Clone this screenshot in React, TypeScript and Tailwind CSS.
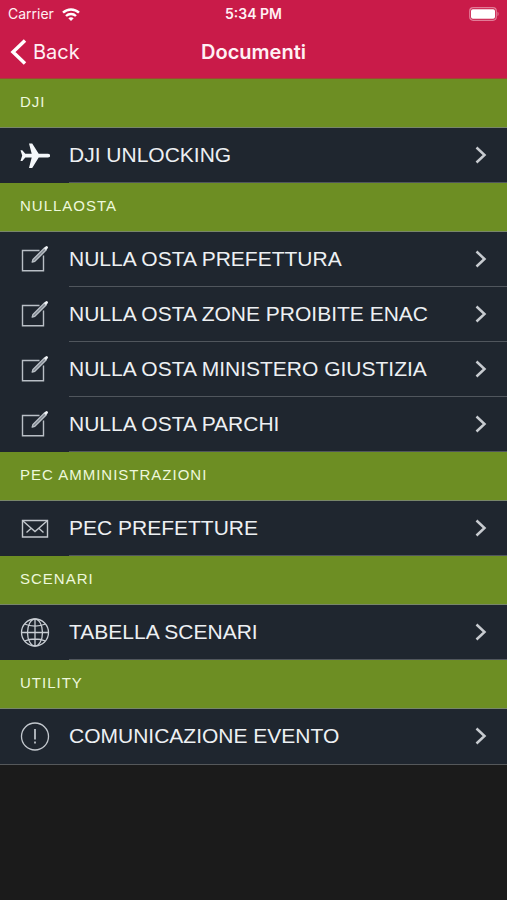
import type { ReactNode } from "react";

type IconName = "plane" | "edit" | "mail" | "globe" | "alert";

const icons: Record<IconName, ReactNode> = {
  plane: (
    <path
      d="M0.500 10.200h1.800l3 3.600h6.400L9 3.500h3.200l6.500 10.300H27c2 0 3.300.8 3.300 1.800s-1.300 1.800-3.300 1.800h-8.300L12.200 28H9l2.700-10.600H5.300l-3 3.600H.5l1.700-5.400z"
      fill="#f4f7fa"
    />
  ),
  edit: (
    <g fill="none" stroke="#b9bfc6" strokeWidth="1.400">
      <path d="M19.500 6.500H2.500v20.300h21V11.500" />
      <path d="M13 15.500L24.500 4l1.800 1.800L14.800 17.300l-2.600.8z" fill="#79818a" strokeLinejoin="round" />
      <path d="M25.700 4.300l.9-.9" stroke="#f0f3f6" strokeWidth="2.800" strokeLinecap="round" />
    </g>
  ),
  mail: (
    <g fill="none" stroke="#c3c8ce" strokeWidth="1.400">
      <path d="M2.500 7.500h25v16.500h-25z" />
      <path d="M3 8l12 10.500L27 8M6.500 19.500l5-4.500M23.500 19.500l-5-4.500" />
    </g>
  ),
  globe: (
    <g fill="none" stroke="#c8cdd3" strokeWidth="1.300">
      <circle cx="15" cy="15.500" r="13.500" />
      <ellipse cx="15" cy="15.500" rx="7.500" ry="13.500" />
      <path d="M15 2v27M1.500 15.500h27M4.500 7c6 2.700 15 2.700 21 0M4.500 24c6-2.700 15-2.700 21 0" />
    </g>
  ),
  alert: (
    <g fill="none" stroke="#c3c8ce" strokeWidth="1.300">
      <circle cx="15" cy="15.500" r="13.500" />
      <path d="M15 8v10.500M15 20.500v2" strokeWidth="1.700" />
    </g>
  ),
};

const sections: { title: string; icon: IconName; rows: string[] }[] = [
  { title: "DJI", icon: "plane", rows: ["DJI UNLOCKING"] },
  {
    title: "NULLAOSTA",
    icon: "edit",
    rows: [
      "NULLA OSTA PREFETTURA",
      "NULLA OSTA ZONE PROIBITE ENAC",
      "NULLA OSTA MINISTERO GIUSTIZIA",
      "NULLA OSTA PARCHI",
    ],
  },
  { title: "PEC AMMINISTRAZIONI", icon: "mail", rows: ["PEC PREFETTURE"] },
  { title: "SCENARI", icon: "globe", rows: ["TABELLA SCENARI"] },
  { title: "UTILITY", icon: "alert", rows: ["COMUNICAZIONE EVENTO"] },
];

function StatusBar() {
  return (
    <div className="grid h-7 grid-cols-3 items-center px-2 text-sm">
      <div className="flex items-center gap-2">
        <span>Carrier</span>
        <svg width="18" height="13" viewBox="0 0 18 13" fill="none" stroke="white" strokeWidth="2.400" aria-hidden="true">
          <path d="M1 4.700c4.500-4.300 11.500-4.300 16 0M4 8c2.800-2.700 7.200-2.700 10 0" />
          <path d="M6.300 10.200c1.600-1.400 3.800-1.400 5.400 0L9 13z" fill="white" stroke="none" />
        </svg>
      </div>
      <span className="text-center font-semibold">5:34 PM</span>
      <svg className="justify-self-end" width="30" height="14" viewBox="0 0 30 14" aria-hidden="true">
        <rect x="0.700" y="0.700" width="26.600" height="12.600" rx="3.500" fill="none" stroke="#e27c97" strokeWidth="1.200" />
        <rect x="2" y="2.300" width="24" height="9.400" rx="1.800" fill="white" />
        <path d="M28.500 4.800c1.500.6 1.500 3.800 0 4.400z" fill="#e27c97" />
      </svg>
    </div>
  );
}

function Row({ label, icon, last }: { label: string; icon: IconName; last: boolean }) {
  return (
    <li className={last ? "border-b border-[#55585b]" : ""}>
      <button type="button" className="flex h-[55px] w-full items-stretch pl-5 text-left">
        <span className="flex w-[49px] shrink-0 items-center">
          <svg width="30" height="32" viewBox="0 0 30 32" aria-hidden="true">
            {icons[icon]}
          </svg>
        </span>
        <span className={`flex min-w-0 flex-1 items-center justify-between border-b pr-5 ${last ? "border-transparent" : "border-[#50565d]"}`}>
          <span className="text-[21px] leading-7 text-[#edf0f3]">{label}</span>
          <svg width="12" height="18" viewBox="0 0 12 18" fill="none" stroke="#c7cbd0" strokeWidth="2.500" aria-hidden="true">
            <path d="M1.500 1.500L9.500 9l-8 7.500" />
          </svg>
        </span>
      </button>
    </li>
  );
}

export default function App() {
  return (
    <div className="min-h-screen bg-[#1b1b1b] font-['Liberation_Sans',Arial,sans-serif]">
      <header className="border-b border-[#a04733] bg-[#c91b49] font-[Inter,sans-serif] text-[#fff0f4]">
        <StatusBar />
        <nav className="grid h-[50px] grid-cols-[1fr_auto_1fr] items-center px-[10px] pb-0.5 text-xl leading-6">
          <button type="button" className="flex items-center gap-1.5 justify-self-start">
            <svg width="17" height="26" viewBox="0 0 17 26" fill="none" stroke="white" strokeWidth="3.500" aria-hidden="true">
              <path d="M15 1.500L3 13l12 11.500" />
            </svg>
            Back
          </button>
          <h1 className="font-semibold">Documenti</h1>
        </nav>
      </header>
      <main>
        {sections.map((section, index) => (
          <section key={section.title}>
            <h2 className="flex h-[49px] items-center border-b border-[#78866a] bg-[#6d8e23] px-5 pb-0.5 text-[15px] leading-5 tracking-[1px] text-[#edf8dc]">
              {section.title}
            </h2>
            <ul className="bg-[#1f262f]">
              {section.rows.map((label, i) => (
                <Row
                  key={label}
                  label={label}
                  icon={section.icon}
                  last={index === sections.length - 1 && i === section.rows.length - 1}
                />
              ))}
            </ul>
          </section>
        ))}
      </main>
    </div>
  );
}
